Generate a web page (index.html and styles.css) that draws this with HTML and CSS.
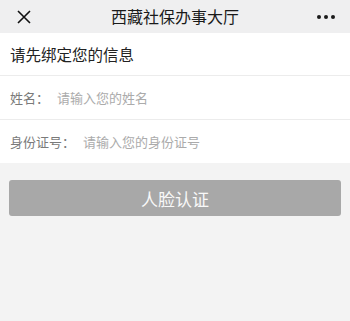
FILE: index.html
```html
<!DOCTYPE html>
<html lang="zh">
<head>
<meta charset="utf-8">
<title>西藏社保办事大厅</title>
<link rel="stylesheet" href="styles.css">
</head>
<body>
<header class="nav">
  <span class="nav-close">
    <svg width="14" height="14" viewBox="0 0 14 14"><path d="M1 1L13 13M13 1L1 13" stroke="#111" stroke-width="1.6" fill="none"/></svg>
  </span>
  <span class="nav-title">西藏社保办事大厅</span>
  <span class="nav-more"><i></i><i></i><i></i></span>
</header>
<section class="form">
  <div class="form-head">请先绑定您的信息</div>
  <div class="form-row"><span class="label">姓名：</span><span class="ph">请输入您的姓名</span></div>
  <div class="form-row"><span class="label">身份证号：</span><span class="ph">请输入您的身份证号</span></div>
</section>
<div class="actions">
  <button class="btn">人脸认证</button>
</div>
</body>
</html>
```

FILE: styles.css
```css
html, body {
  margin: 0;
  padding: 0;
}
body {
  width: 350px;
  height: 321px;
  background: #f3f3f3;
  font-family: "Noto Sans CJK SC", "Noto Sans", sans-serif;
  overflow: hidden;
}
.nav {
  height: 33px;
  background: #efeff0;
  display: flex;
  align-items: center;
  justify-content: space-between;
  padding: 0 15px 0 17px;
  position: relative;
}
.nav-close {
  display: flex;
  width: 14px;
  height: 14px;
}
.nav-title {
  position: absolute;
  left: 0;
  right: 0;
  text-align: center;
  font-size: 16px;
  color: #1a1a1a;
  line-height: 33px;
  pointer-events: none;
}
.nav-more {
  display: flex;
  gap: 3px;
}
.nav-more i {
  display: block;
  width: 4px;
  height: 4px;
  border-radius: 50%;
  background: #1a1a1a;
}
.form {
  background: #fff;
}
.form-head {
  height: 42px;
  line-height: 42px;
  padding-left: 10px;
  font-size: 15.5px;
  color: #222;
  border-bottom: 1px solid #ececec;
}
.form-row {
  height: 43px;
  display: flex;
  align-items: center;
  padding-left: 10px;
  font-size: 13px;
  border-bottom: 1px solid #ececec;
}
.form-row:last-child {
  border-bottom: none;
}
.label {
  color: #7a7a7a;
  margin-right: 8px;
}
.ph {
  color: #ababab;
}
.actions {
  padding: 17px 9px 0;
}
.btn {
  display: block;
  width: 100%;
  height: 36px;
  border: none;
  border-radius: 3px;
  background: #a8a8a8;
  color: #f8f8f8;
  font-family: "Noto Sans CJK SC", "Noto Sans", sans-serif;
  font-size: 17px;
  padding: 0;
}
```
